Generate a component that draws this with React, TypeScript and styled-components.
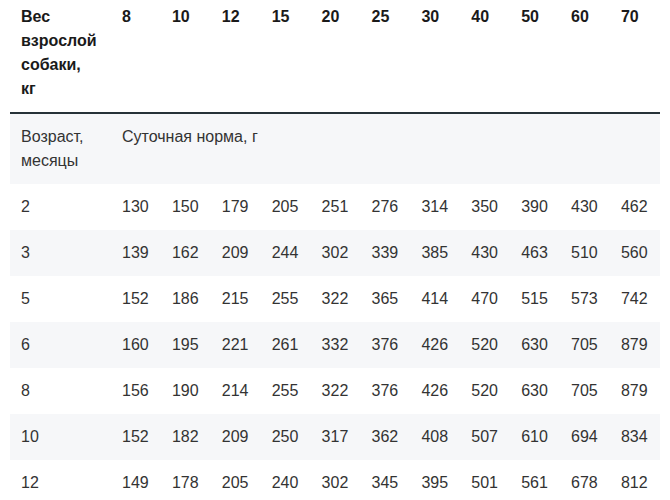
import React from 'react';
import styled, { createGlobalStyle } from 'styled-components';

const GlobalStyle = createGlobalStyle`
  body {
    margin: 0;
    background: #fff;
    font-family: "Liberation Sans", Arial, sans-serif;
  }
`;

const Wrapper = styled.div`
  padding: 0 10px;
`;

const Table = styled.table`
  width: 650px;
  border-collapse: collapse;
  table-layout: fixed;
  font-size: 16px;
  line-height: 24px;
  color: #333;
`;

const HeadCell = styled.th`
  text-align: left;
  vertical-align: top;
  font-weight: 700;
  color: #1a1a1a;
  padding: 5px 11px 11px;
  border-bottom: 2px solid #263238;
`;

const Row = styled.tr<{ $shade: boolean }>`
  background: ${(p) => (p.$shade ? '#f6f7f9' : '#fff')};
`;

const Cell = styled.td`
  padding: 11px;
  vertical-align: top;
  white-space: nowrap;
`;

const weights = [8, 10, 12, 15, 20, 25, 30, 40, 50, 60, 70];

const rows: [string, number[]][] = [
  ['2', [130, 150, 179, 205, 251, 276, 314, 350, 390, 430, 462]],
  ['3', [139, 162, 209, 244, 302, 339, 385, 430, 463, 510, 560]],
  ['5', [152, 186, 215, 255, 322, 365, 414, 470, 515, 573, 742]],
  ['6', [160, 195, 221, 261, 332, 376, 426, 520, 630, 705, 879]],
  ['8', [156, 190, 214, 255, 322, 376, 426, 520, 630, 705, 879]],
  ['10', [152, 182, 209, 250, 317, 362, 408, 507, 610, 694, 834]],
  ['12', [149, 178, 205, 240, 302, 345, 395, 501, 561, 678, 812]],
];

const App = () => {
  return (
    <Wrapper>
      <GlobalStyle />
      <Table>
        <colgroup>
          <col style={{ width: 101 }} />
          {weights.map((w) => (
            <col key={w} style={{ width: 49.9 }} />
          ))}
        </colgroup>
        <thead>
          <tr>
            <HeadCell>
              Вес
              <br />
              взрослой
              <br />
              собаки,
              <br />
              кг
            </HeadCell>
            {weights.map((w) => (
              <HeadCell key={w}>{w}</HeadCell>
            ))}
          </tr>
        </thead>
        <tbody>
          <Row $shade>
            <Cell>
              Возраст,
              <br />
              месяцы
            </Cell>
            <Cell colSpan={11}>Суточная норма, г</Cell>
          </Row>
          {rows.map(([age, values], i) => (
            <Row key={age} $shade={i % 2 === 1}>
              <Cell>{age}</Cell>
              {values.map((v, j) => (
                <Cell key={j}>{v}</Cell>
              ))}
            </Row>
          ))}
        </tbody>
      </Table>
    </Wrapper>
  );
};

export default App;
